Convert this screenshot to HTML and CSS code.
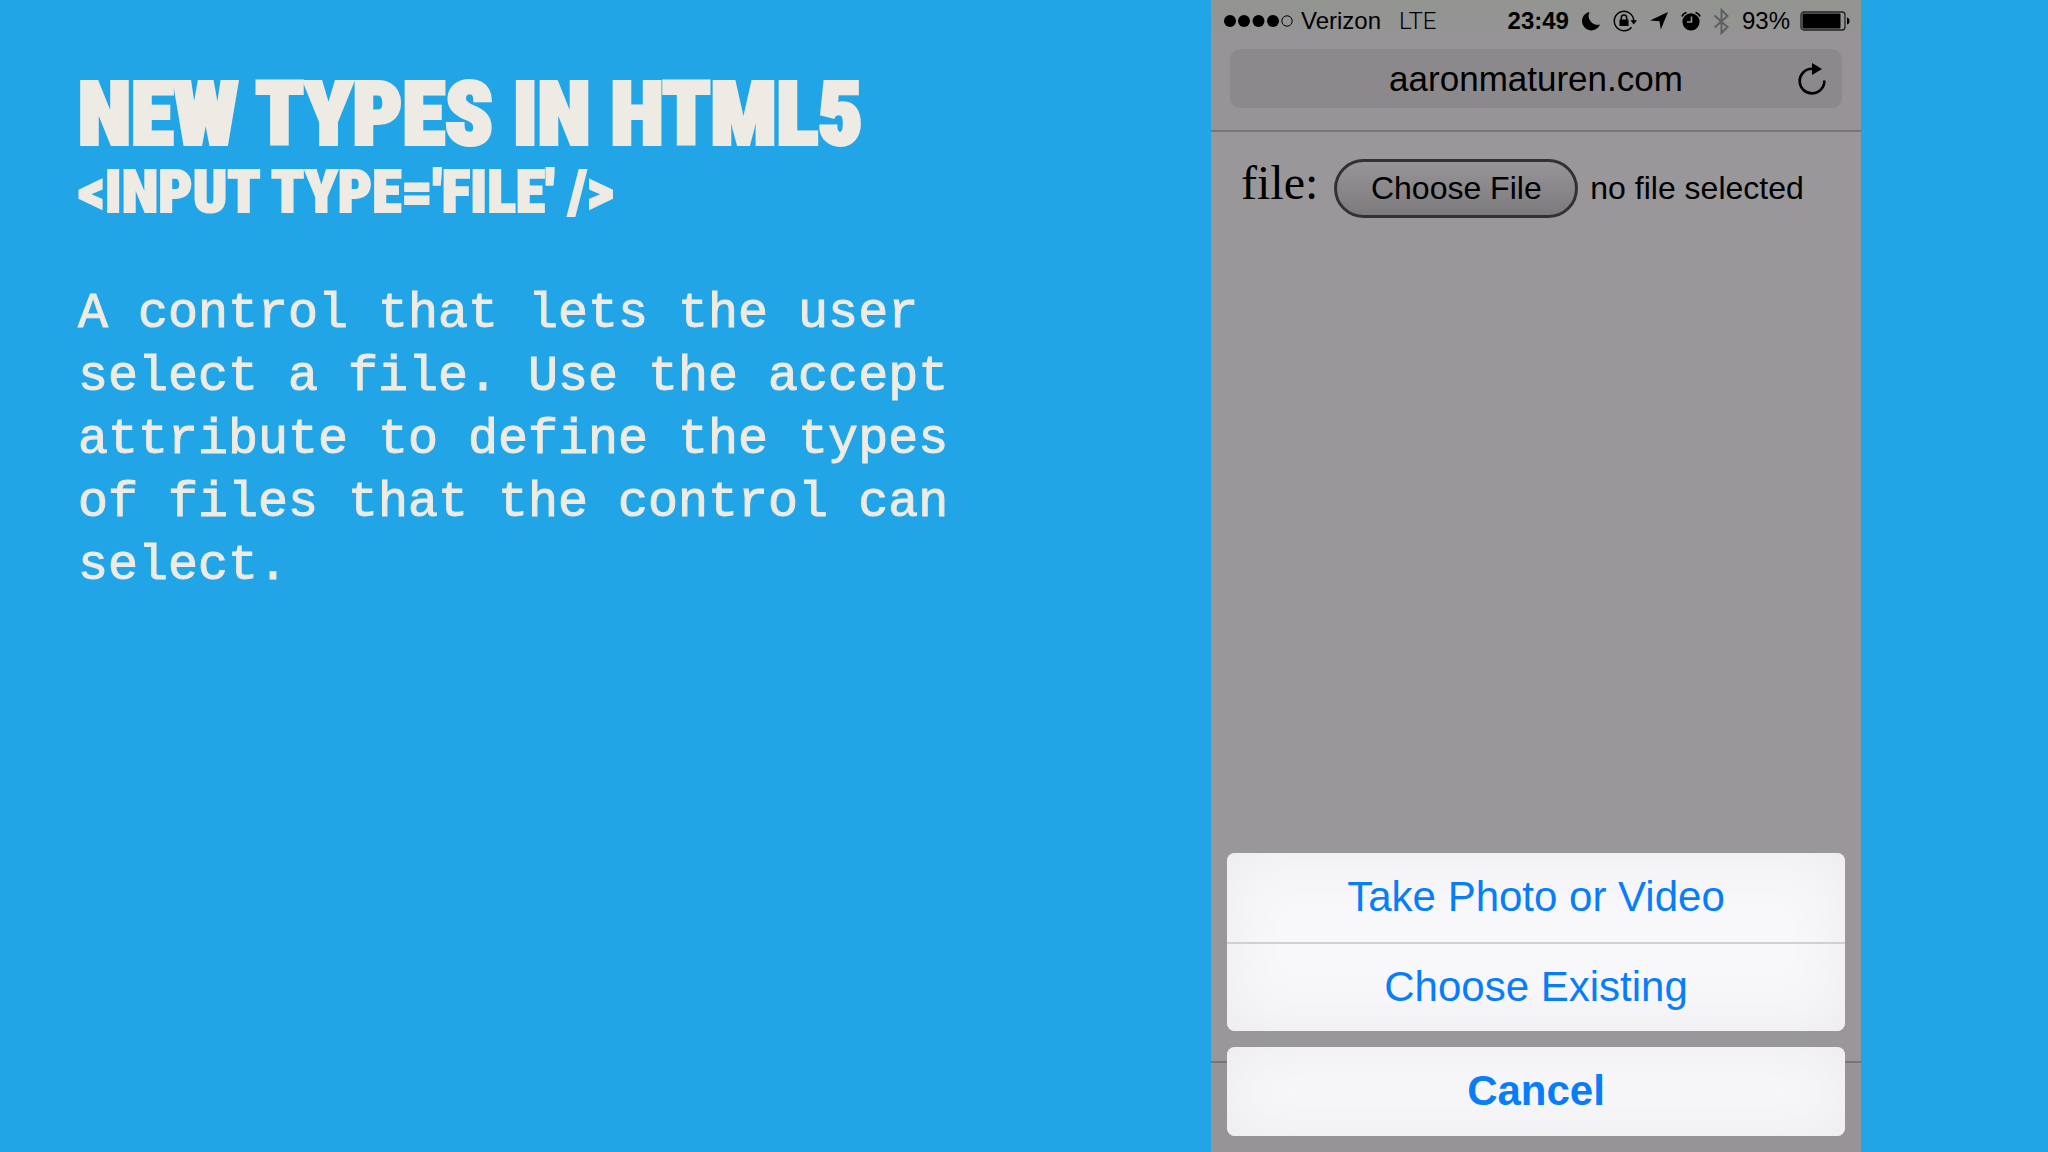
FILE: index.html
```html
<!DOCTYPE html>
<html lang="en">
<head>
<meta charset="utf-8">
<title>New types in HTML5</title>
<link rel="stylesheet" href="styles.css">
</head>
<body>
<main class="slide">
  <section class="copy">
    <h1 class="title">NEW TYPES IN HTML5</h1>
    <h2 class="subtitle">&lt;INPUT TYPE='FILE' /&gt;</h2>
    <p class="description">A control that lets the user select a file. Use the accept attribute to define the types of files that the control can select.</p>
  </section>

  <section class="phone">
    <header class="browser">
      <div class="status">
        <div class="carrier">
          <svg class="signal" width="70" height="14" viewBox="0 0 70 14"><circle cx="7" cy="7" r="6"/><circle cx="21" cy="7" r="6"/><circle cx="35.500" cy="7" r="6"/><circle cx="50" cy="7" r="6"/><circle cx="64" cy="7" r="5.200" fill="none" stroke="#000"/></svg>
          <span>Verizon</span>
          <span class="network">LTE</span>
        </div>
        <div class="indicators">
          <strong class="clock">23:49</strong>
          <svg width="20" height="20" viewBox="0 0 20 20"><path d="M8.500 1A9.300 9.300 0 1 0 19 13.500 9 9 0 0 1 8.500 1z"/></svg>
          <svg width="24" height="24" viewBox="0 0 24 24"><path d="M18.500 18.200A9.700 9.700 0 1 1 20.700 12" fill="none" stroke="#000" stroke-width="1.500"/><path d="M17.500 11.200H24L20.700 15.500z"/><path d="M6.500 10.500h9v6.500h-9z"/><path d="M8.300 11V8.800a2.700 2.700 0 0 1 5.400 0V11" fill="none" stroke="#000" stroke-width="1.500"/></svg>
          <svg width="20" height="20" viewBox="0 0 20 20"><path d="M19 1L11.800 18.500 10.500 10.200 1 9.400z"/></svg>
          <svg width="20" height="20" viewBox="0 0 20 20"><circle cx="10" cy="10.800" r="8.600"/><path d="M10.500 5.500V11H6" fill="none" stroke="#969495" stroke-width="1.600"/><path d="M1 5.500Q2 2.500 5.500 1.500M19 5.500Q18 2.500 14.500 1.500" fill="none" stroke="#000" stroke-width="1.800"/></svg>
          <svg width="17" height="27" viewBox="0 0 17 27"><path d="M1.500 7.500L14.500 19 8.500 25V2l6 6L1.500 19.500" fill="none" stroke="#5f5e60" stroke-width="2"/></svg>
          <span>93%</span>
          <svg class="battery" width="50" height="20" viewBox="0 0 50 20"><rect x="1" y="1" width="44" height="18" rx="3" fill="none" stroke="#222" stroke-width="1.300"/><rect x="2.500" y="2.500" width="38" height="15" rx="1"/><path d="M47 6.500q2.500.500 2.500 3.500T47 13.500z"/></svg>
        </div>
      </div>
      <div class="address">
        <span class="host">aaronmaturen.com</span>
        <button class="reload" type="button" aria-label="Reload">
          <svg width="30" height="34" viewBox="0 0 30 34"><path d="M27.300 18.500A12.300 12.300 0 1 1 15 6.800h3" fill="none" stroke="#000" stroke-width="2.600"/><path d="M15 1v12l10-6z"/></svg>
        </button>
      </div>
    </header>

    <form class="form">
      <label class="label" for="file">file:</label>
      <button class="choose" id="file" type="button">Choose File</button>
      <output class="chosen" for="file">no file selected</output>
    </form>

    <footer class="toolbar"></footer>

    <div class="sheet" role="dialog" aria-label="File source">
      <div class="group">
        <button class="action" type="button">Take Photo or Video</button>
        <button class="action" type="button">Choose Existing</button>
      </div>
      <div class="group">
        <button class="action cancel" type="button">Cancel</button>
      </div>
    </div>
  </section>
</main>
</body>
</html>
```

FILE: styles.css
```css
* {
  box-sizing: border-box;
}

body {
  margin: 0;
  background: #22a5e7;
  font-family: "Liberation Sans", Arial, sans-serif;
}

.slide {
  display: grid;
  grid-template-columns: minmax(0, 1211fr) minmax(0, 650fr) minmax(0, 187fr);
  min-height: 100vh;
}

.copy {
  padding: 66px 224px 40px 78px;
  color: #eeebe5;
}

.title,
.subtitle {
  margin: 0;
  font-family: "Roboto Condensed", Roboto, sans-serif;
  font-weight: 900;
  white-space: nowrap;
  -webkit-text-stroke: 4px #eeebe5;
}

.title {
  font-size: 87px;
  line-height: 96px;
}

.subtitle {
  font-size: 60px;
  line-height: 60px;
  -webkit-text-stroke-width: 2px;
}

.description {
  margin: 60px 0 0;
  font-family: "Liberation Mono", "Courier New", monospace;
  font-size: 50px;
  line-height: 63px;
  -webkit-text-stroke: 1px #eeebe5;
}

.phone {
  position: relative;
  display: flex;
  flex-direction: column;
  background: #999799;
  color: #000;
}

.browser {
  padding-bottom: 22px;
  border-bottom: 2px solid #777578;
  background: linear-gradient(#929590, #969496 36px);
}

.status {
  display: flex;
  justify-content: space-between;
  align-items: center;
  height: 42px;
  padding: 0 11px 0 12px;
  font-size: 24px;
}

.carrier,
.indicators {
  display: flex;
  align-items: center;
}

.carrier {
  gap: 8px;
}

.network {
  margin-left: 10px;
  font-family: Roboto, sans-serif;
  font-weight: 300;
}

.indicators {
  gap: 12px;
}

.battery {
  margin-left: -2px;
}

.address {
  display: grid;
  grid-template-columns: 60px 1fr 60px;
  align-items: center;
  height: 59px;
  margin: 7px 19px 0;
  border-radius: 10px;
  background: #8b898c;
}

.host {
  grid-column: 2;
  font-size: 35px;
  text-align: center;
}

.reload {
  display: flex;
  justify-content: center;
  padding: 0;
  border: 0;
  background: none;
}

.form {
  display: flex;
  flex: 1;
  align-items: baseline;
  padding: 23px 30px;
  font-size: 32px;
}

.label {
  margin-right: 16px;
  font-family: "Liberation Serif", "Times New Roman", serif;
  font-size: 48px;
}

.choose {
  width: 244px;
  height: 59px;
  padding: 0;
  border: 3px solid #343135;
  border-radius: 30px;
  background: linear-gradient(#979597, #7c7a7d);
  color: #000;
  font: inherit;
}

.chosen {
  margin-left: 12px;
  white-space: nowrap;
}

.toolbar {
  height: 91px;
  border-top: 2px solid #777578;
  background: #969496;
}

.sheet {
  position: absolute;
  right: 16px;
  bottom: 16px;
  left: 16px;
  display: grid;
  gap: 16px;
}

.group {
  overflow: hidden;
  border-radius: 8px;
  background: #f8f7fa;
  box-shadow: inset 0 0 60px #ebeaed;
}

.action {
  display: block;
  width: 100%;
  height: 89px;
  padding: 0 0 2px;
  border: 0;
  background: none;
  color: #087dfa;
  font: inherit;
  font-size: 42px;
}

.action + .action {
  border-top: 2px solid #d0cfd2;
}

.cancel {
  font-weight: 700;
}
```
